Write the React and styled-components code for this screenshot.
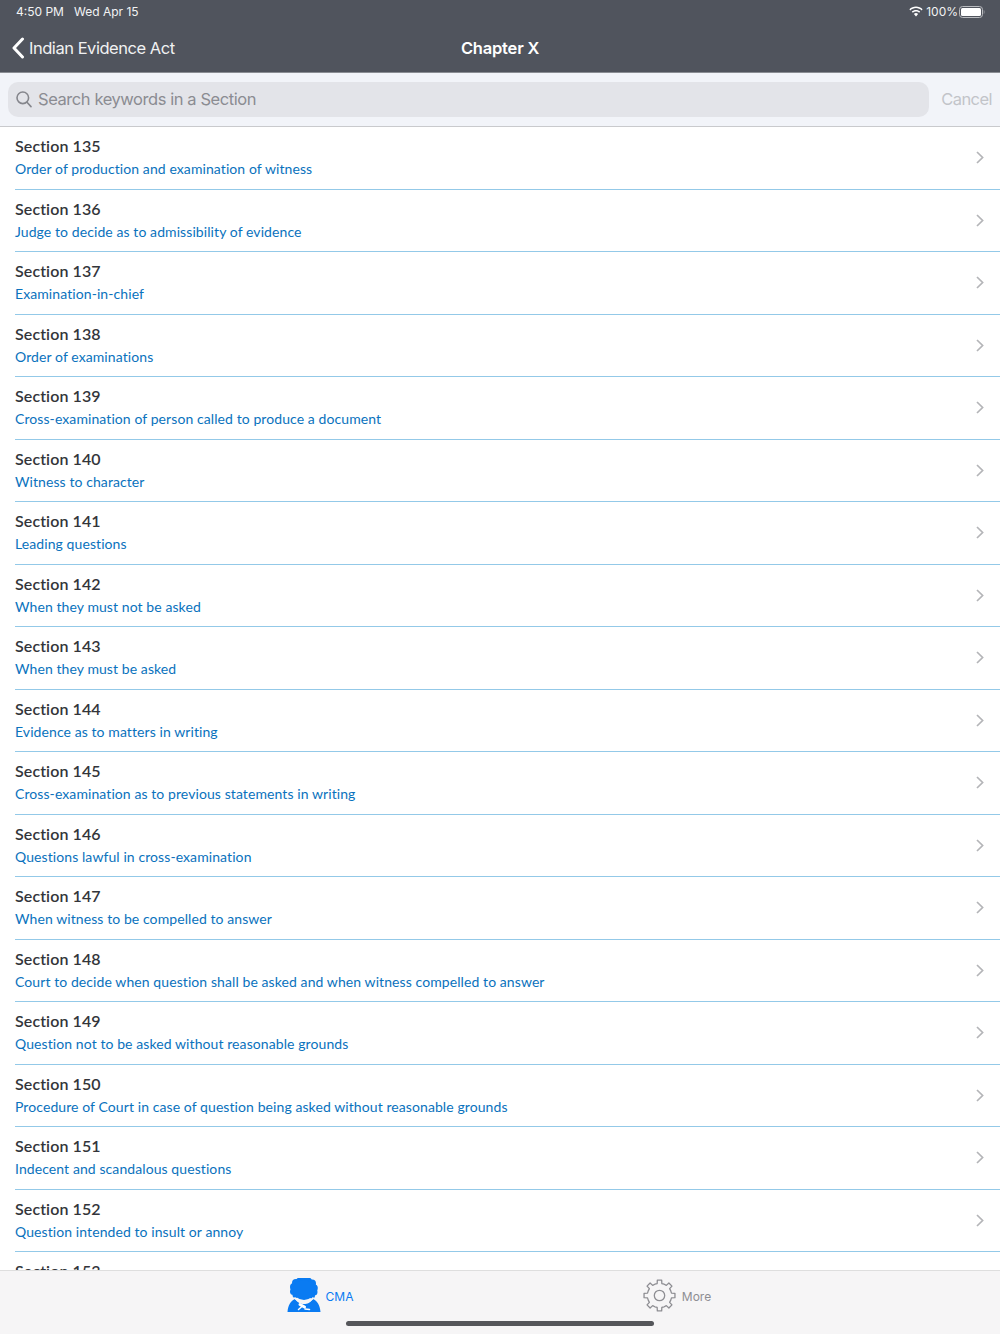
import React from 'react';
import styled, { createGlobalStyle } from 'styled-components';

const GlobalStyle = createGlobalStyle`
  html, body {
    margin: 0;
    padding: 0;
    background: #fff;
  }
`

const sections = [
  ['135', 'Order of production and examination of witness'],
  ['136', 'Judge to decide as to admissibility of evidence'],
  ['137', 'Examination-in-chief'],
  ['138', 'Order of examinations'],
  ['139', 'Cross-examination of person called to produce a document'],
  ['140', 'Witness to character'],
  ['141', 'Leading questions'],
  ['142', 'When they must not be asked'],
  ['143', 'When they must be asked'],
  ['144', 'Evidence as to matters in writing'],
  ['145', 'Cross-examination as to previous statements in writing'],
  ['146', 'Questions lawful in cross-examination'],
  ['147', 'When witness to be compelled to answer'],
  ['148', 'Court to decide when question shall be asked and when witness compelled to answer'],
  ['149', 'Question not to be asked without reasonable grounds'],
  ['150', 'Procedure of Court in case of question being asked without reasonable grounds'],
  ['151', 'Indecent and scandalous questions'],
  ['152', 'Question intended to insult or annoy'],
  ['153', 'Intimidating questions'],
];

const Page = styled.div`
  width: 1000px;
  height: 1334px;
  display: flex;
  flex-direction: column;
  overflow: hidden;
  font-family: Inter, "Liberation Sans", sans-serif;
`

const Header = styled.header`
  height: 72px;
  flex: none;
  background: #50545d;
  color: #fff;
  display: flex;
  flex-direction: column;
  border-bottom: 1px solid #8a8d93;
`

const StatusBar = styled.div`
  height: 23px;
  padding: 0 15px 0 16px;
  display: flex;
  align-items: center;
  justify-content: space-between;
  font-size: 12px;
  color: #f2f3f4;
`

const StatusLeft = styled.div`
  display: flex;
  gap: 10px;
`

const StatusRight = styled.div`
  display: flex;
  align-items: center;
`

const BatteryLevel = styled.span`
  margin: 0 1px 0 3px;
`

const NavBar = styled.div`
  flex: 1;
  display: grid;
  grid-template-columns: 1fr auto 1fr;
  align-items: center;
  padding: 0 12px;
`

const BackLink = styled.div`
  display: flex;
  align-items: center;
  gap: 4px;
  font-size: 16.5px;
  letter-spacing: -0.47px;
  color: #f0f1f2;
`

const NavTitle = styled.div`
  font-size: 16.5px;
  font-weight: 600;
  letter-spacing: -0.2px;
`

const SearchArea = styled.div`
  height: 54px;
  flex: none;
  box-sizing: border-box;
  background: #f2f4f9;
  border-bottom: 1px solid #c9cacd;
  display: flex;
  align-items: center;
  padding: 0 8px;
  gap: 12px;
`

const SearchField = styled.div`
  flex: 1;
  height: 35px;
  box-sizing: border-box;
  border-radius: 10px;
  background: #e3e4e9;
  display: flex;
  align-items: center;
  gap: 6px;
  padding: 0 8px 1px;
  color: #8b8c92;
  font-size: 16.5px;
  letter-spacing: -0.43px;
`

const CancelLabel = styled.div`
  color: #c2c4c9;
  font-size: 16.5px;
  letter-spacing: -0.55px;
  padding-bottom: 1px;
`

const List = styled.div`
  flex: 1;
  min-height: 0;
  overflow: hidden;
`

const Row = styled.div`
  height: 62.5px;
  box-sizing: border-box;
  margin-left: 15px;
  padding-right: 16px;
  border-bottom: 1px solid #93c9e8;
  display: flex;
  justify-content: space-between;
  align-items: center;
`

const RowText = styled.div`
  display: flex;
  flex-direction: column;
  align-self: flex-start;
  gap: 4px;
  padding-top: 9px;
  font-family: Lato, "Liberation Sans", sans-serif;
`

const RowTitle = styled.div`
  font-size: 16px;
  line-height: 20px;
  font-weight: 600;
  letter-spacing: 0.1px;
  color: #33353a;
`

const RowSubtitle = styled.div`
  font-size: 14px;
  line-height: 18px;
  color: #0a72bd;
  letter-spacing: 0.085px;
`

const Footer = styled.footer`
  height: 64px;
  flex: none;
  box-sizing: border-box;
  background: #f6f5f6;
  border-top: 1px solid #dedede;
  position: relative;
  display: grid;
  grid-template-columns: 357px 357px;
  justify-content: center;
  padding-right: 3px;
`

const TabItem = styled.div`
  display: flex;
  align-items: center;
  justify-content: center;
  gap: ${({ $active }) => ($active ? '5px' : '6px')};
  height: 50px;
  font-size: 12px;
  color: ${({ $active }) => ($active ? '#0a7bf2' : '#8e8e93')};

  svg {
    margin-bottom: 2px;
  }
`

const HomeBar = styled.div`
  position: absolute;
  left: 346px;
  bottom: 8px;
  width: 308px;
  height: 5px;
  border-radius: 3px;
  background: #55565a;
`

const Chevron = () => (
  <svg width="8" height="13" viewBox="0 0 8 13" fill="none" stroke="#b4b5b8" strokeWidth="1.7">
    <path d="M1 1 L6.6 6.5 L1 12" />
  </svg>
)

const BackIcon = () => (
  <svg width="13" height="22" viewBox="0 0 13 22" fill="none" stroke="#fff" strokeWidth="3" strokeLinecap="round" strokeLinejoin="round">
    <path d="M10.5 2 L2 11 L10.5 20" />
  </svg>
)

const SearchIcon = () => (
  <svg width="16" height="17" viewBox="0 0 16 17" fill="none" stroke="#85868c" strokeWidth="1.6" strokeLinecap="round">
    <circle cx="6.8" cy="6.8" r="5.8" />
    <path d="M11 11.3 L15 15.6" />
  </svg>
)

const WifiIcon = () => (
  <svg width="14" height="11" viewBox="0 0 14 11" fill="#fff">
    <path d="M7 0.6 C9.6 0.6 11.9 1.6 13.6 3.3 L12.6 4.4 C11.1 3 9.2 2.1 7 2.1 C4.8 2.1 2.9 3 1.4 4.4 L0.4 3.3 C2.1 1.6 4.4 0.6 7 0.6 Z" />
    <path d="M7 3.9 C8.6 3.9 10.1 4.5 11.2 5.6 L10.2 6.7 C9.3 5.9 8.2 5.4 7 5.4 C5.8 5.4 4.7 5.9 3.8 6.7 L2.8 5.6 C3.9 4.5 5.4 3.9 7 3.9 Z" />
    <path d="M7 7.1 C7.8 7.1 8.5 7.4 9.1 7.9 L7 10.4 L4.9 7.9 C5.5 7.4 6.2 7.1 7 7.1 Z" />
  </svg>
)

const BatteryIcon = () => (
  <svg width="26" height="12" viewBox="0 0 26 12">
    <rect x="0.5" y="0.5" width="23" height="11" rx="3" fill="none" stroke="#b9bbbf" />
    <rect x="2" y="2" width="20" height="8" rx="1.5" fill="#fff" />
    <path d="M24.8 4 C25.6 4.3 25.6 7.7 24.8 8 Z" fill="#b9bbbf" />
  </svg>
)

// hair is a ring of bumps, face cut out by the white collar arc
const hairBumps = [
  [9, 5, 4], [13, 3.5, 4], [17, 3.5, 4], [21, 3.5, 4], [25, 5.5, 4],
  [7, 9, 4], [27, 10, 3.8], [6.5, 13.5, 3.5], [27, 14, 3.5],
  [8.5, 17, 3], [25, 17.5, 3],
];

const LawyerIcon = () => (
  <svg width="34" height="34" viewBox="0 0 34 34">
    <g fill="#0a7bf2">
      {hairBumps.map(([cx, cy, r]) => (
        <circle key={`${cx}-${cy}`} cx={cx} cy={cy} r={r} />
      ))}
      <ellipse cx="17" cy="12" rx="11" ry="10" />
      <path d="M8 21 C11 25 13.5 26 17 26 C20.5 26 23 25 26 21 C30 22.5 33 27 33.5 34 L0.5 34 C1 27 4 22.5 8 21 Z" />
    </g>
    <path d="M7.5 19.5 C10.5 23.5 13.5 24.5 17 24.5 C20.5 24.5 23.5 23.5 26.5 19.5" fill="none" stroke="#f6f5f6" strokeWidth="1.6" />
    <g stroke="#fff" strokeLinecap="round" fill="none">
      <path d="M13 26.5 L17.5 29" strokeWidth="3" />
      <path d="M15.5 28 L11.5 31.5" strokeWidth="1.5" />
      <path d="M18 31 L22.5 31.5" strokeWidth="1.5" />
    </g>
  </svg>
)

// 8 toothed gear outline around the centre of a 33 box
const gearPath = Array.from({ length: 8 }, (_, i) => {
  const at = (deg, r) => {
    const a = ((i * 45 + deg - 90) * Math.PI) / 180;
    return `${(16.5 + r * Math.cos(a)).toFixed(2)} ${(16.5 + r * Math.sin(a)).toFixed(2)}`;
  };
  return `${i ? 'L' : 'M'}${at(-22.5, 12.2)} L${at(-11, 12.2)} L${at(-8, 15.6)} L${at(8, 15.6)} L${at(11, 12.2)}`;
}).join(' ') + ' Z';

const GearIcon = () => (
  <svg width="33" height="33" viewBox="0 0 33 33" fill="none" stroke="#8e8e93" strokeWidth="1.3" strokeLinejoin="round">
    <circle cx="16.5" cy="16.5" r="5.2" />
    <path d={gearPath} />
  </svg>
)

export default () => (
  <Page>
    <GlobalStyle />
    <Header>
      <StatusBar>
        <StatusLeft>
          <span>4:50 PM</span>
          <span>Wed Apr 15</span>
        </StatusLeft>
        <StatusRight>
          <WifiIcon />
          <BatteryLevel>100%</BatteryLevel>
          <BatteryIcon />
        </StatusRight>
      </StatusBar>
      <NavBar>
        <BackLink>
          <BackIcon />
          Indian Evidence Act
        </BackLink>
        <NavTitle>Chapter X</NavTitle>
      </NavBar>
    </Header>
    <SearchArea>
      <SearchField>
        <SearchIcon />
        Search keywords in a Section
      </SearchField>
      <CancelLabel>Cancel</CancelLabel>
    </SearchArea>
    <List>
      {sections.map(([number, title]) => (
        <Row key={number}>
          <RowText>
            <RowTitle>Section {number}</RowTitle>
            <RowSubtitle>{title}</RowSubtitle>
          </RowText>
          <Chevron />
        </Row>
      ))}
    </List>
    <Footer>
      <TabItem $active>
        <LawyerIcon />
        CMA
      </TabItem>
      <TabItem>
        <GearIcon />
        More
      </TabItem>
      <HomeBar />
    </Footer>
  </Page>
);
